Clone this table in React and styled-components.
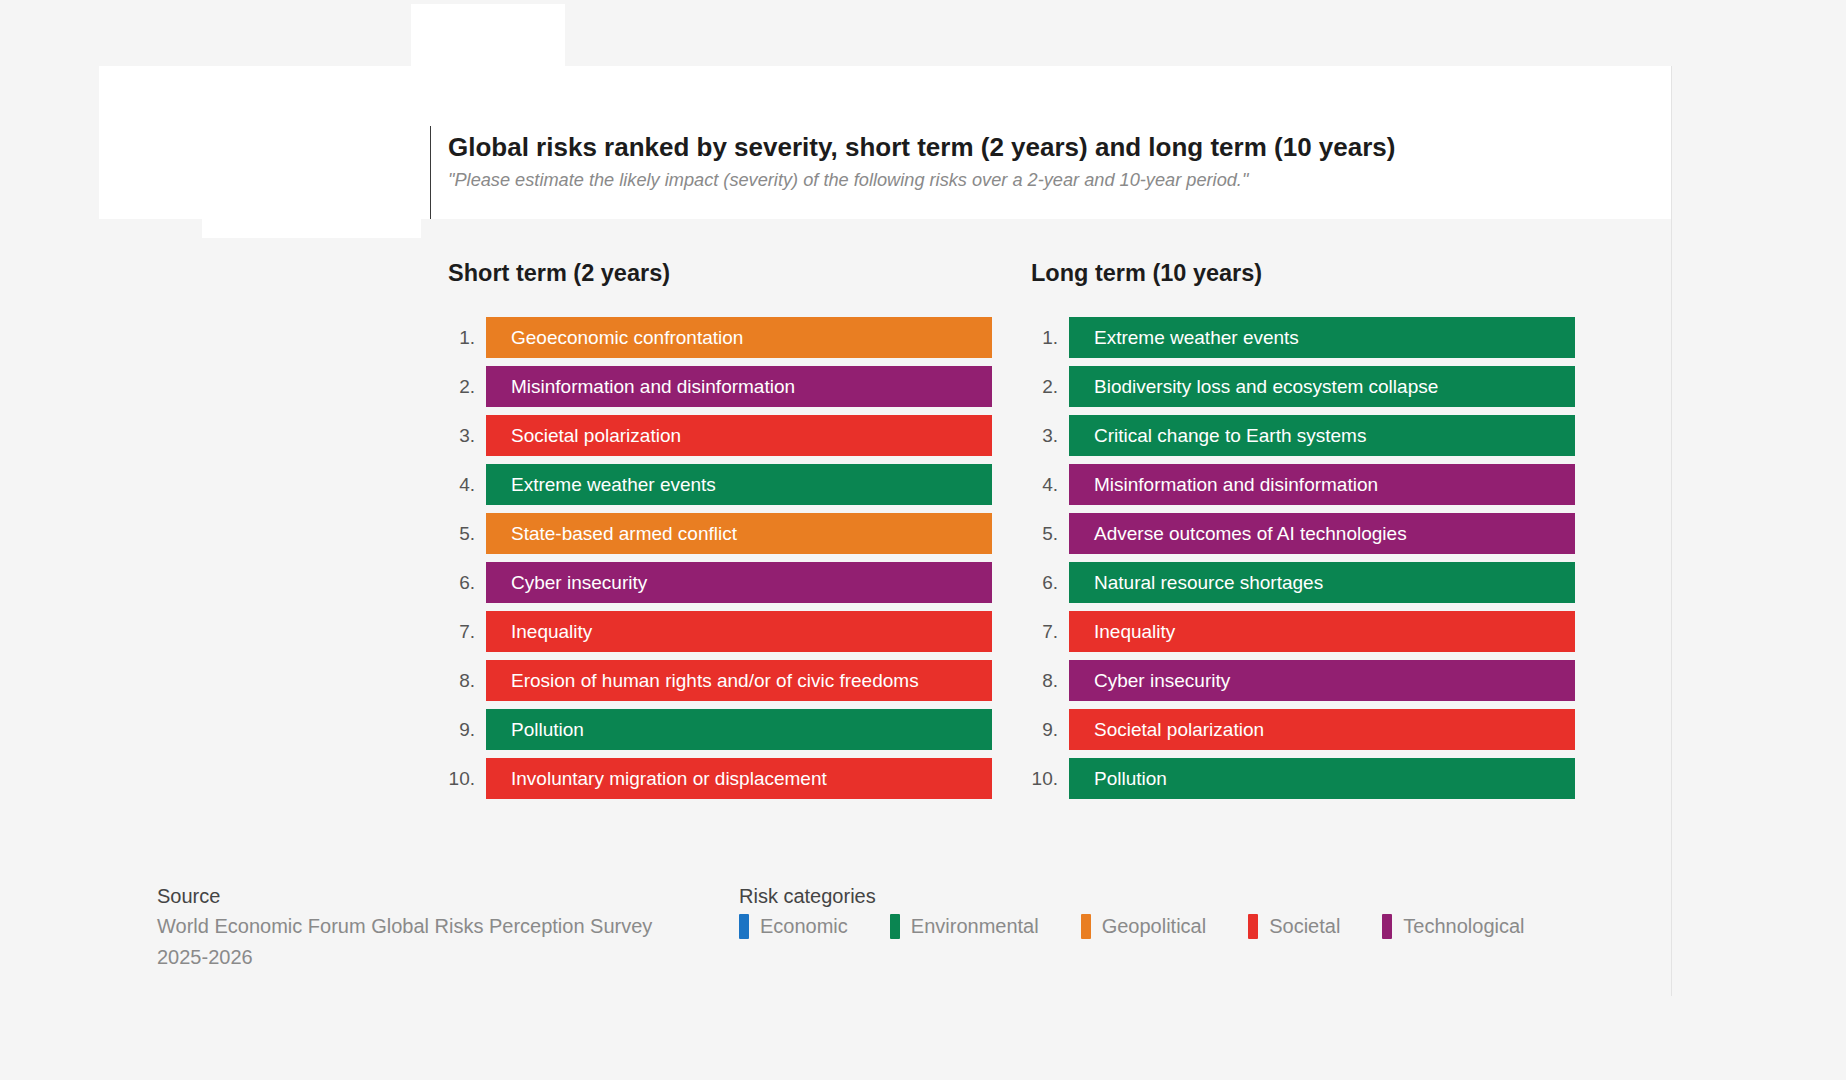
import styled, { createGlobalStyle } from 'styled-components';

const GlobalStyle = createGlobalStyle`
  html, body {
    margin: 0;
    padding: 0;
    background: #f5f5f5;
  }
  body {
    font-family: "Liberation Sans", Arial, sans-serif;
    color: #222;
  }
`;

const COLORS = {
  economic: '#1b74c4',
  environmental: '#0a8551',
  geopolitical: '#e97e22',
  societal: '#e8302a',
  technological: '#921f71',
};

const shortTerm = [
  { name: 'Geoeconomic confrontation', cat: 'geopolitical' },
  { name: 'Misinformation and disinformation', cat: 'technological' },
  { name: 'Societal polarization', cat: 'societal' },
  { name: 'Extreme weather events', cat: 'environmental' },
  { name: 'State-based armed conflict', cat: 'geopolitical' },
  { name: 'Cyber insecurity', cat: 'technological' },
  { name: 'Inequality', cat: 'societal' },
  { name: 'Erosion of human rights and/or of civic freedoms', cat: 'societal' },
  { name: 'Pollution', cat: 'environmental' },
  { name: 'Involuntary migration or displacement', cat: 'societal' },
];

const longTerm = [
  { name: 'Extreme weather events', cat: 'environmental' },
  { name: 'Biodiversity loss and ecosystem collapse', cat: 'environmental' },
  { name: 'Critical change to Earth systems', cat: 'environmental' },
  { name: 'Misinformation and disinformation', cat: 'technological' },
  { name: 'Adverse outcomes of AI technologies', cat: 'technological' },
  { name: 'Natural resource shortages', cat: 'environmental' },
  { name: 'Inequality', cat: 'societal' },
  { name: 'Cyber insecurity', cat: 'technological' },
  { name: 'Societal polarization', cat: 'societal' },
  { name: 'Pollution', cat: 'environmental' },
];

const legend = [
  { label: 'Economic', cat: 'economic' },
  { label: 'Environmental', cat: 'environmental' },
  { label: 'Geopolitical', cat: 'geopolitical' },
  { label: 'Societal', cat: 'societal' },
  { label: 'Technological', cat: 'technological' },
];

const Page = styled.div`
  min-height: 1080px;
  padding-top: 4px;
  box-sizing: border-box;
`;

const TopTab = styled.div`
  margin-left: 411px;
  width: 154px;
  height: 62px;
  background: #fff;
`;

const Frame = styled.div`
  margin-left: 99px;
  width: 1572px;
  border-right: 1px solid #e3e3e3;
  padding-bottom: 23px;
`;

const Header = styled.header`
  display: flex;
  height: 153px;
  padding: 60px 0 0 331px;
  box-sizing: border-box;
  background: #fff;
`;

const TitleBlock = styled.div`
  border-left: 1px solid #3a3a3a;
  padding: 5px 0 0 17px;
`;

const Title = styled.h1`
  margin: 0;
  font-size: 26px;
  line-height: 32px;
  font-weight: 700;
  color: #1c1c1c;
`;

const Subtitle = styled.p`
  margin: 5px 0 0;
  font-size: 18.2px;
  line-height: 24px;
  font-style: italic;
  color: #8a8a8a;
`;

const UnderTab = styled.div`
  margin-left: 103px;
  width: 219px;
  height: 19px;
  background: #fff;
`;

const Columns = styled.div`
  display: flex;
  gap: 39px;
  padding-left: 349px;
  margin-top: 21px;
`;

const Column = styled.section`
  width: 544px;
`;

const ColumnTitle = styled.h2`
  margin: 0 0 30px;
  font-size: 23.5px;
  line-height: 28px;
  font-weight: 700;
  color: #1c1c1c;
`;

const List = styled.ol`
  list-style: none;
  margin: 0;
  padding: 0;
  display: flex;
  flex-direction: column;
  gap: 8px;
`;

const Row = styled.li`
  display: flex;
  height: 41px;
`;

const Rank = styled.span`
  width: 38px;
  padding-right: 11px;
  box-sizing: border-box;
  display: flex;
  align-items: center;
  justify-content: flex-end;
  font-size: 19px;
  color: #555;
`;

const Bar = styled.div`
  flex: 1;
  display: flex;
  align-items: center;
  padding-left: 25px;
  font-size: 19px;
  color: #fff;
  background: ${({ $cat }) => COLORS[$cat]};
`;

const Footer = styled.footer`
  display: flex;
  margin-top: 82px;
  padding-left: 58px;
`;

const SourceBlock = styled.div`
  width: 582px;
`;

const FooterLabel = styled.div`
  font-size: 20px;
  line-height: 30px;
  color: #444;
`;

const SourceText = styled.div`
  font-size: 20px;
  line-height: 31px;
  color: #8a8a8a;
`;

const LegendItems = styled.div`
  display: flex;
  gap: 42px;
`;

const LegendItem = styled.div`
  display: flex;
  align-items: center;
  gap: 11px;
  font-size: 20px;
  line-height: 31px;
  color: #8a8a8a;
`;

const Swatch = styled.span`
  width: 10px;
  height: 25px;
  border-radius: 1px;
  background: ${({ $cat }) => COLORS[$cat]};
`;

function RiskColumn({ title, items }) {
  return (
    <Column>
      <ColumnTitle>{title}</ColumnTitle>
      <List>
        {items.map((item, i) => (
          <Row key={item.name}>
            <Rank>{i + 1}.</Rank>
            <Bar $cat={item.cat}>{item.name}</Bar>
          </Row>
        ))}
      </List>
    </Column>
  );
}

export default function App() {
  return (
    <>
      <GlobalStyle />
      <Page>
        <TopTab />
        <Frame>
          <Header>
            <TitleBlock>
              <Title>Global risks ranked by severity, short term (2 years) and long term (10 years)</Title>
              <Subtitle>"Please estimate the likely impact (severity) of the following risks over a 2-year and 10-year period."</Subtitle>
            </TitleBlock>
          </Header>
          <UnderTab />
          <Columns>
            <RiskColumn title="Short term (2 years)" items={shortTerm} />
            <RiskColumn title="Long term (10 years)" items={longTerm} />
          </Columns>
          <Footer>
            <SourceBlock>
              <FooterLabel>Source</FooterLabel>
              <SourceText>
                World Economic Forum Global Risks Perception Survey
                <br />
                2025-2026
              </SourceText>
            </SourceBlock>
            <div>
              <FooterLabel>Risk categories</FooterLabel>
              <LegendItems>
                {legend.map((l) => (
                  <LegendItem key={l.cat}>
                    <Swatch $cat={l.cat} />
                    {l.label}
                  </LegendItem>
                ))}
              </LegendItems>
            </div>
          </Footer>
        </Frame>
      </Page>
    </>
  );
}
